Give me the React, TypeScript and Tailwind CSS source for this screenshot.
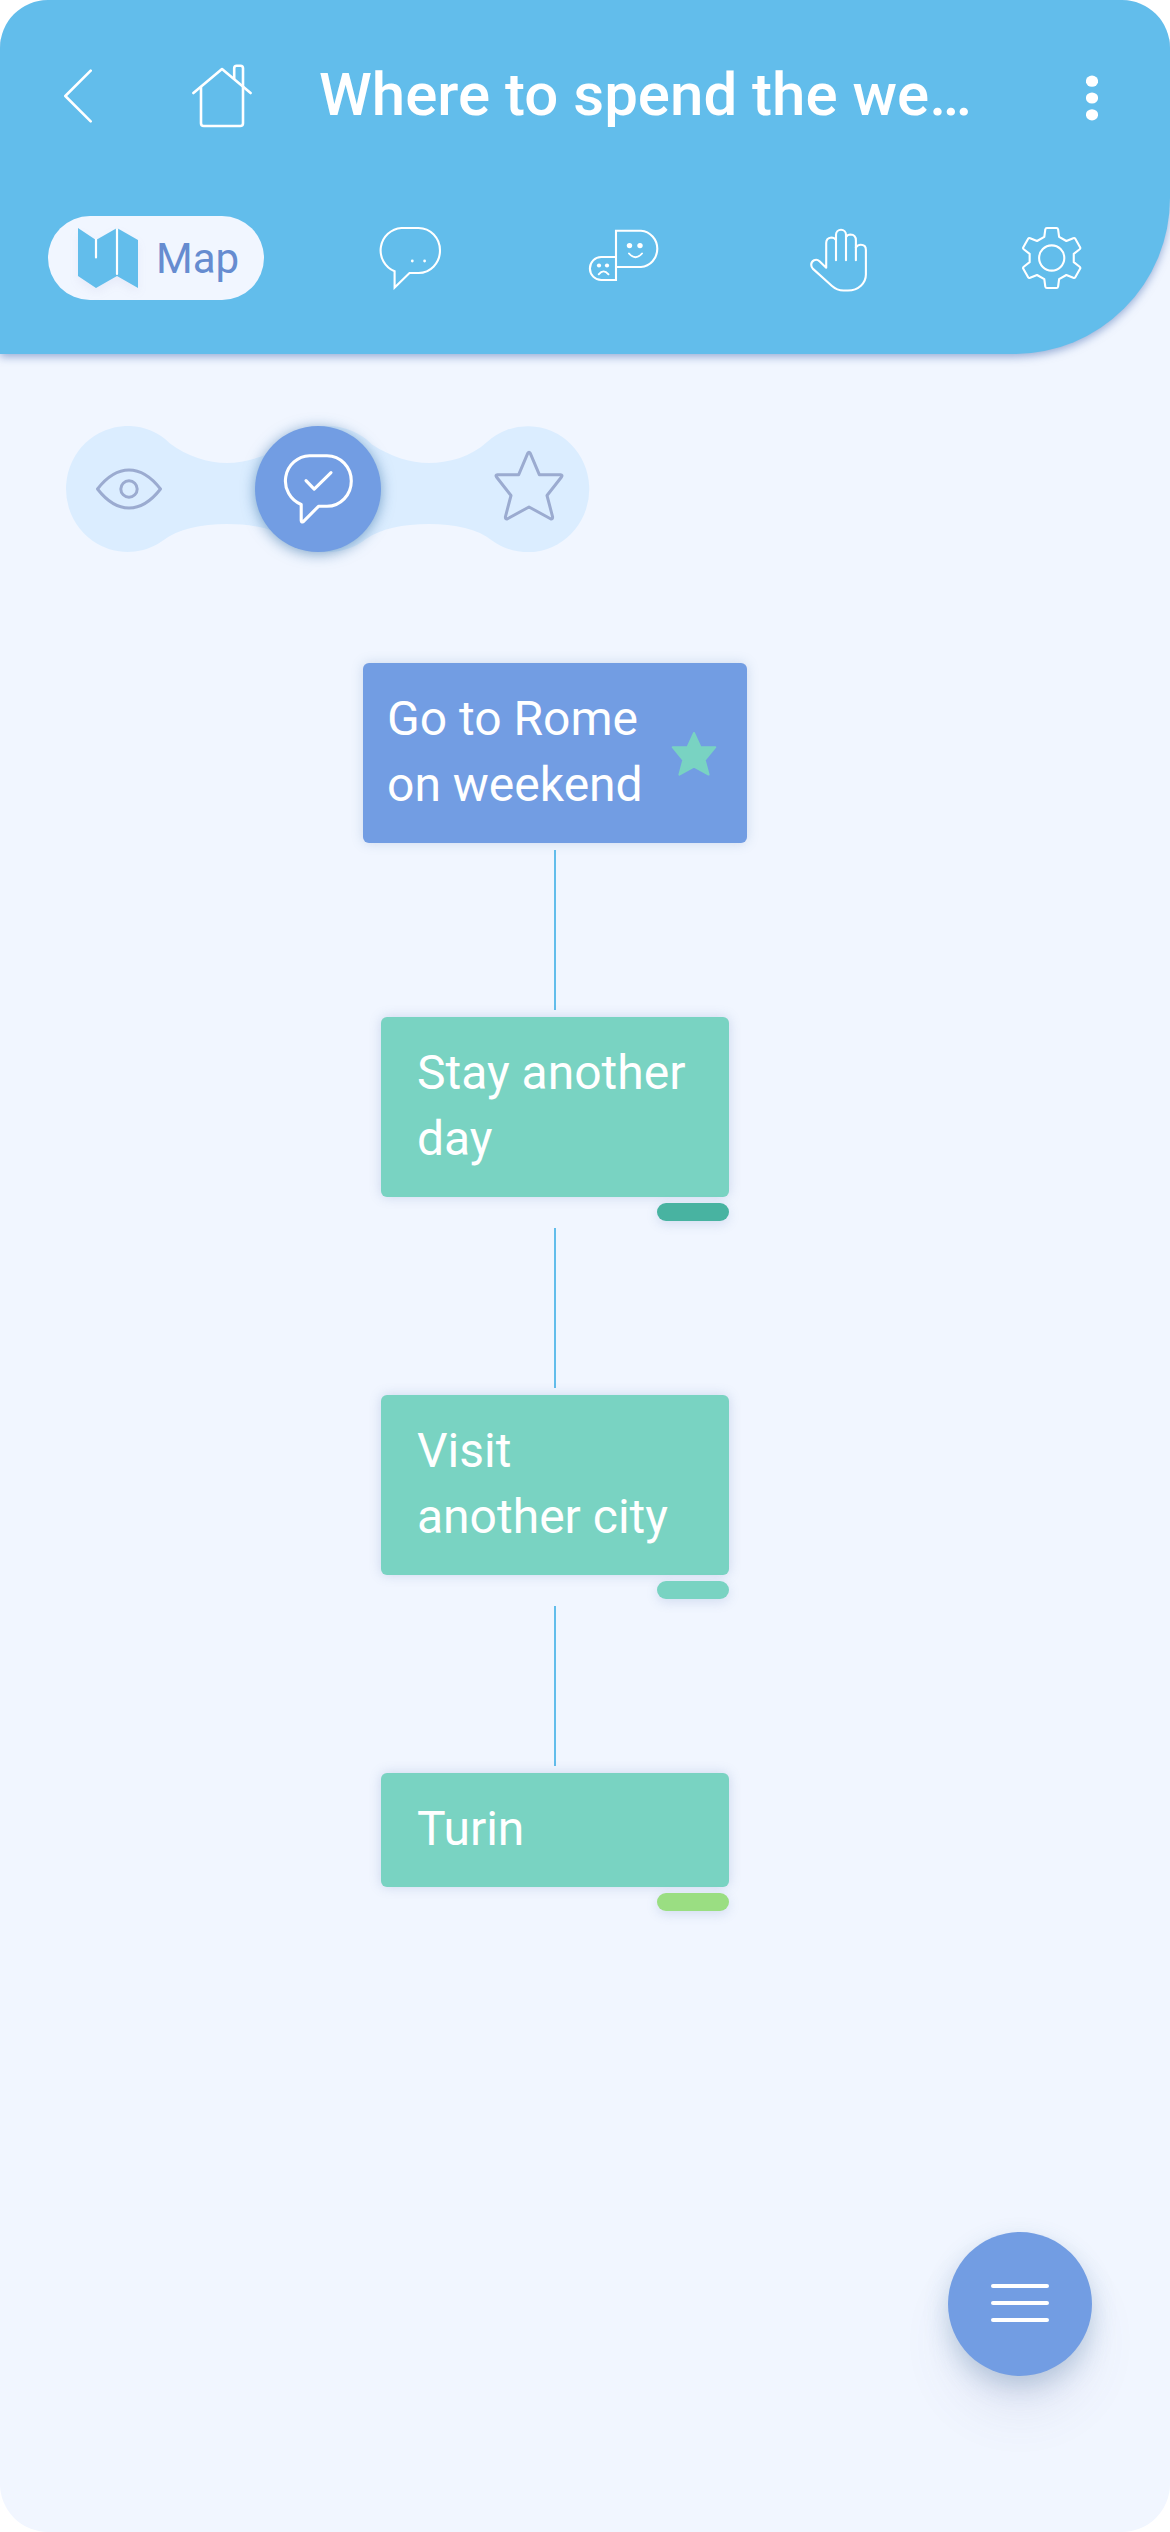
import React from "react";

const stroke = {
  fill: "none",
  stroke: "currentColor",
  strokeLinecap: "round",
  strokeLinejoin: "round",
} as const;

function BackIcon() {
  return (
    <svg className="h-[54px] w-[30px]" viewBox="0 0 30 54" {...stroke} strokeWidth="2.6">
      <path d="M27.7 1.7 2.3 27l25.4 25.3" />
    </svg>
  );
}

function HomeIcon() {
  return (
    <svg className="h-[64px] w-[60px]" viewBox="192 64 60 64" {...stroke} strokeWidth="2.6">
      <path d="M193.4 93 222 69l28.6 24" />
      <path d="M201 87.500V123.200Q201 126 203.800 126H240.200Q243 126 243 123.200V68.200Q243 65.700 240.500 65.700H236.700Q234.200 65.700 234.200 68.200V78.500" />
    </svg>
  );
}

function MoreIcon() {
  return (
    <svg className="h-[46px] w-[12px]" viewBox="0 0 12 46" fill="currentColor">
      <ellipse cx="6" cy="6.2" rx="6.1" ry="5.600" />
      <ellipse cx="6" cy="23" rx="6.1" ry="5.600" />
      <ellipse cx="6" cy="39.800" rx="6.1" ry="5.600" />
    </svg>
  );
}

function MapIcon() {
  return (
    <svg
      className="h-[60px] w-[60px] overflow-visible drop-shadow-[0_5px_5px_rgba(120,100,170,0.07)]"
      viewBox="0 0 60 60"
    >
      <path d="M0 0 18 12 39 0 60 12V60L39 48 18 60 0 48Z" fill="#62bdeb" />
      <path d="M18 11.500V29.500M39 1V46" stroke="#fff" strokeWidth="2.2" strokeLinecap="round" />
    </svg>
  );
}

function ChatIcon() {
  return (
    <svg className="h-[64px] w-[64px]" viewBox="378 226 64 64" {...stroke} strokeWidth="2.1">
      <path
        strokeLinejoin="miter"
        d="M401.500 228H418.500A21.500 22.500 0 0 1 418.500 273H409.500L394.600 287.600V271.300A22.400 22.500 0 0 1 401.500 228Z"
      />
      <circle cx="412.300" cy="261" r="1.400" fill="currentColor" stroke="none" />
      <circle cx="424.600" cy="261" r="1.400" fill="currentColor" stroke="none" />
    </svg>
  );
}

function FacesIcon() {
  return (
    <svg className="h-[60px] w-[72px]" viewBox="588 226 72 60" {...stroke} strokeWidth="2.1">
      <path
        strokeLinejoin="miter"
        d="M616 257H601.200A11.300 11.500 0 0 0 601.200 280H616V230.700H641A17.600 18.200 0 0 1 641 267H616"
      />
      <path d="M629 253.500Q635.500 261 642 253.500M598.700 274.300Q603.500 268.500 608.500 274.300" strokeWidth="1.900" />
      <g fill="currentColor" stroke="none">
        <circle cx="629.500" cy="245.600" r="2.700" />
        <circle cx="640" cy="245.600" r="2.700" />
        <circle cx="599" cy="265.500" r="2.100" />
        <circle cx="607" cy="265.500" r="2.100" />
      </g>
    </svg>
  );
}

function HandIcon() {
  return (
    <svg className="h-[64px] w-[58px]" viewBox="809 227.500 58 64" {...stroke} strokeWidth="2.1">
      <path d="M836 259.700V234.300A5 5 0 0 1 846 234.300V259.700" />
      <path d="M846 236.500Q847.500 234 850.500 234Q855.900 234.200 855.900 240V259.700" />
      <path d="M836 239.500Q834.500 237 831.200 237Q826.200 237.500 826.200 242.500V267.200L819.500 260.800C816 257.500 811.200 260.300 811.200 264.300Q811.200 266.700 813 268.400L832 285.500Q837 290 843.500 290H848C858.500 290 865.900 282.500 865.900 274V249.500Q865.900 244.300 860.800 244.300Q857.800 244.300 855.900 247" />
    </svg>
  );
}

const toothOutline: [number, number][] = [
  [-7.4, -21.2],
  [-6.4, -28.6],
  [-6.1, -30],
  [-4.8, -30],
  [4.8, -30],
  [6.1, -30],
  [6.4, -28.6],
  [7.4, -21.2],
];

const gearPath =
  [0, 60, 120, 180, 240, 300]
    .map((deg, i) => {
      const a = (deg * Math.PI) / 180;
      const p = toothOutline.map(
        ([x, y]) =>
          `${(x * Math.cos(a) - y * Math.sin(a)).toFixed(2)} ${(x * Math.sin(a) + y * Math.cos(a)).toFixed(2)}`,
      );
      return `${i ? "L" : "M"}${p[0]}L${p[1]}Q${p[2]} ${p[3]}L${p[4]}Q${p[5]} ${p[6]}L${p[7]}`;
    })
    .join("") + "Z";

function GearIcon() {
  return (
    <svg className="h-[64px] w-[64px]" viewBox="-32 -32 64 64" {...stroke} strokeWidth="2.1">
      <g transform="translate(-.3 0)">
        <path d={gearPath} />
        <circle r="12.600" />
      </g>
    </svg>
  );
}

function EyeIcon() {
  return (
    <svg className="h-[44px] w-[66px]" viewBox="96 467 66 44" {...stroke} strokeWidth="3">
      <path d="M97.500 489C108 475.500 119 470 129 470S150 475.500 160.500 489C150 502.500 139 508 129 508S108 502.500 97.500 489Z" />
      <circle cx="129" cy="489" r="8.200" />
    </svg>
  );
}

function BubbleCheckIcon() {
  return (
    <svg className="h-[72px] w-[72px]" viewBox="282 453 72 72" {...stroke} strokeWidth="3.1">
      <path d="M309.500 455.700H327A24.300 25.300 0 0 1 327 506.300H318.500L303.300 521.700Q301.300 522.800 301.200 520.500V504.500A25 25.300 0 0 1 309.500 455.700Z" />
      <path d="M306 480.700 314.200 489.200 331 472.700" />
    </svg>
  );
}

function StarOutlineIcon() {
  return (
    <svg className="h-[72px] w-[72px]" viewBox="493 449 72 72" {...stroke} strokeWidth="3">
      <path d="M530.300 453.300 539.300 474.700H560.500Q562.800 475 561.500 477L547 495.500 552.600 516.800Q552.800 519.500 550.500 518.800L529 507 507.500 518.800Q505.200 519.500 505.400 516.800L511 495.500 496.500 477Q495.200 475 497.500 474.700H518.700L527.700 453.300Q529 451.300 530.300 453.300Z" />
    </svg>
  );
}

function StarSolidIcon() {
  return (
    <svg
      className="mt-[3px] h-[46px] w-[46px] shrink-0"
      viewBox="0 0 46 46"
      fill="#79d3c2"
      stroke="#79d3c2"
      strokeWidth="2"
      strokeLinejoin="round"
    >
      <path d="M23 2 29.500 16.200H44.300L33.700 29 37.600 43.600 23 35.600 8.400 43.600 12.300 29 1.700 16.200H16.500Z" />
    </svg>
  );
}

function Header() {
  return (
    <header className="flex h-[354px] flex-col rounded-br-[156px] bg-[#62bdeb] text-white shadow-[0_3px_9px_rgba(80,115,180,0.55)]">
      <div className="flex h-[192px] items-center pl-[63px] pr-[72px]">
        <BackIcon />
        <div className="ml-[99px]">
          <HomeIcon />
        </div>
        <h1 className="-mt-[2px] ml-[67px] grow truncate text-[60px] font-medium leading-[72px]">
          Where to spend the we…
        </h1>
        <div className="mt-[3px]">
          <MoreIcon />
        </div>
      </div>
      <nav className="flex h-[132px] items-center pl-12">
        <div className="flex h-[84px] w-[216px] items-center rounded-full bg-[#f1f6ff] pl-[30px]">
          <MapIcon />
          <span className="ml-[18px] mt-[2px] text-[42px] leading-[50px] text-[#668cd0]">Map</span>
        </div>
        <div className="ml-[114px]">
          <ChatIcon />
        </div>
        <div className="-mt-1 ml-[146px]">
          <FacesIcon />
        </div>
        <div className="ml-[149px] mt-[3px]">
          <HandIcon />
        </div>
        <div className="ml-[153px]">
          <GearIcon />
        </div>
      </nav>
    </header>
  );
}

function FilterBar() {
  return (
    <div className="relative ml-[66px] mt-[72px] h-[126px] w-[524px]">
      <svg className="absolute inset-0 h-[126px] w-[524px]" viewBox="66 426 524 126">
        <path
          fill="#dbedff"
          d="M163 540.400A61.500 63 0 1 1 170 443.400C187 456 208 463 227 463S268 456 283 444.400A63 63 0 0 1 372 444.400C390 456 410 463 429 463S471 457 487 442A61.500 63 0 1 1 492 540.400C478 529 455 524 429 524S380 529 366 539A63 63 0 0 1 289 539C275 529 253 524 227 524S178 529 163 540.400Z"
        />
      </svg>
      <div className="relative flex h-[126px] items-center text-[#9babd0]">
        <div className="ml-[30px]">
          <EyeIcon />
        </div>
        <div className="ml-[93px] flex size-[126px] items-center justify-center rounded-full bg-[#729de3] text-white shadow-[0_2px_14px_rgba(50,110,165,0.6)]">
          <BubbleCheckIcon />
        </div>
        <div className="-mt-2 ml-[112px]">
          <StarOutlineIcon />
        </div>
      </div>
    </div>
  );
}

function Connector() {
  return <div className="my-[7px] h-[160px] w-[2px] bg-[#62bdeb]" />;
}

function OptionNode({ children, badge }: { children: React.ReactNode; badge: string }) {
  return (
    <div className="flex w-[348px] flex-col items-end">
      <div className="w-full rounded-[6px] bg-[#79d3c2] pb-[25px] pl-9 pr-6 pt-[23px] text-[48px] leading-[66px] text-white shadow-[0_0_12px_rgba(90,120,180,0.25)]">
        {children}
      </div>
      <div className={`mt-[6px] h-[18px] w-[72px] rounded-full shadow-[0_3px_12px_rgba(90,120,180,0.2)] ${badge}`} />
    </div>
  );
}

export default function App() {
  return (
    <div className="h-[2532px] w-[1170px] bg-white font-['Roboto',sans-serif]">
      <main className="relative flex h-full flex-col overflow-hidden rounded-[48px] bg-[#f1f6ff]">
        <Header />
        <FilterBar />
        <section className="ml-[363px] mt-[111px] flex w-[384px] flex-col items-center">
          <div className="flex w-full items-center rounded-[6px] bg-[#729de3] pb-[25px] pl-6 pt-[23px] text-[48px] leading-[66px] text-white shadow-[0_0_12px_rgba(90,130,180,0.25)]">
            <p className="w-[284px]">
              Go to Rome
              <br />
              on weekend
            </p>
            <StarSolidIcon />
          </div>
          <Connector />
          <OptionNode badge="bg-[#48b3a1]">
            Stay another
            <br />
            day
          </OptionNode>
          <Connector />
          <OptionNode badge="bg-[#79d3c2]">
            Visit
            <br />
            another city
          </OptionNode>
          <Connector />
          <OptionNode badge="bg-[#9ade82]">Turin</OptionNode>
        </section>
        <button
          aria-label="Menu"
          className="absolute bottom-[156px] right-[78px] flex size-[144px] flex-col items-center justify-center gap-[13px] rounded-full bg-[#729de3] pb-[2px] shadow-[0_10px_24px_rgba(60,110,150,0.28),0_38px_54px_-6px_rgba(90,90,150,0.12)]"
        >
          <span className="h-[4px] w-[58px] rounded-full bg-white" />
          <span className="h-[4px] w-[58px] rounded-full bg-white" />
          <span className="h-[4px] w-[58px] rounded-full bg-white" />
        </button>
      </main>
    </div>
  );
}
